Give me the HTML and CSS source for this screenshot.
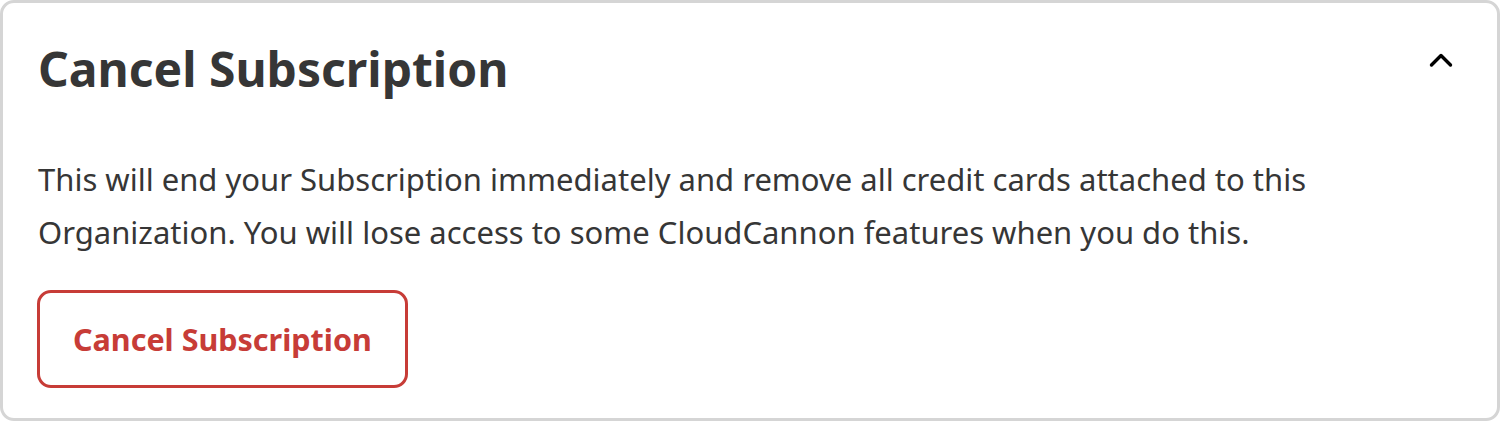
FILE: index.html
```html
<!DOCTYPE html>
<html lang="en">
<head>
    <meta charset="UTF-8">
    <meta name="viewport" content="width=device-width, initial-scale=1.0">
    <title>Cancel Subscription</title>
    <link rel="stylesheet" href="styles.css">
</head>
<body>
    <section class="panel">
        <div class="panel-header">
            <h2>Cancel Subscription</h2>
            <button class="collapse-btn" aria-label="Collapse">
                <svg width="24" height="16" viewBox="0 0 24 16" fill="none">
                    <polyline points="2.5,13 12,3.5 21.5,13" stroke="#000" stroke-width="3.4" stroke-linecap="round" stroke-linejoin="round"/>
                </svg>
            </button>
        </div>

        <div class="panel-body">
            <p>This will end your Subscription immediately and remove all credit cards attached to this Organization. You will lose access to some CloudCannon features when you do this.</p>
            <button class="btn-danger">Cancel Subscription</button>
        </div>
    </section>
</body>
</html>
```

FILE: styles.css
```css
* {
    margin: 0;
    padding: 0;
    box-sizing: border-box;
}

body {
    font-family: 'Noto Sans', 'Open Sans', sans-serif;
    background: #fff;
    color: #363636;
}

.panel {
    width: 1500px;
    height: 421px;
    border: 3px solid #d5d5d5;
    border-radius: 14px;
    background: #fff;
}

.panel-header {
    display: flex;
    justify-content: space-between;
    align-items: flex-start;
    padding: 37px 44px 0 35px;
}

.panel-header h2 {
    font-size: 48px;
    font-weight: 700;
    line-height: 58px;
    color: #363636;
}

.collapse-btn {
    background: none;
    border: none;
    margin-top: 12px;
    cursor: pointer;
    display: flex;
}

.panel-body {
    padding: 55px 35px 0 34px;
}

.panel-body p {
    font-size: 31px;
    line-height: 53px;
    color: #363636;
    max-width: 1300px;
    margin-left: 1px;
}

.btn-danger {
    margin-top: 31px;
    font-family: inherit;
    font-size: 30.5px;
    font-weight: 700;
    line-height: 37px;
    color: #c73c37;
    background: #fff;
    border: 3px solid #c73c37;
    border-radius: 14px;
    padding: 28px 33px 27px 33px;
    cursor: pointer;
}
```
